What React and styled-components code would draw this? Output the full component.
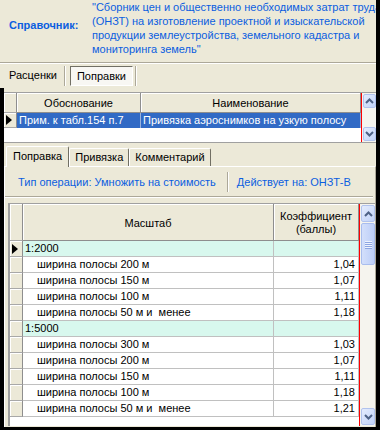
import React from "react";
import styled, { createGlobalStyle, css } from "styled-components";

const BEIGE = "#ECE9D8";
const BLUE = "#0B5EE0";

const GlobalStyle = createGlobalStyle`
  html, body { margin: 0; padding: 0; background: #000; }
  body { font-family: "Liberation Sans", Arial, sans-serif; font-size: 11px; color: #000; }
  * { box-sizing: border-box; }
`;

const rates = [
  { group: "1:2000" },
  { name: "ширина полосы 200 м", value: "1,04" },
  { name: "ширина полосы 150 м", value: "1,07" },
  { name: "ширина полосы 100 м", value: "1,11" },
  { name: "ширина полосы 50 м и  менее", value: "1,18" },
  { group: "1:5000" },
  { name: "ширина полосы 300 м", value: "1,03" },
  { name: "ширина полосы 200 м", value: "1,07" },
  { name: "ширина полосы 150 м", value: "1,11" },
  { name: "ширина полосы 100 м", value: "1,18" },
  { name: "ширина полосы 50 м и  менее", value: "1,21" },
];

const Chevron = ({ down }) => (
  <svg width="9" height="6" viewBox="0 0 9 6">
    <polyline
      points={down ? "1,1 4.5,4.5 8,1" : "1,5 4.5,1.5 8,5"}
      fill="none"
      stroke="#4D6185"
      strokeWidth="2"
    />
  </svg>
);

const ScrollBar = ({ width, thumb, upHeight }) => (
  <Track $width={width}>
    <ScrollBtn $height={upHeight}>
      <Chevron />
    </ScrollBtn>
    {thumb && (
      <Thumb>
        <Grip>
          <span />
          <span />
          <span />
          <span />
        </Grip>
      </Thumb>
    )}
    <Spacer />
    <ScrollBtn $height={upHeight}>
      <Chevron down />
    </ScrollBtn>
  </Track>
);

const App = () => {
  return (
    <>
      <GlobalStyle />
      <Window>
        <Header>
          <Label>Справочник:</Label>
          <Desc>
            <div>"Сборник цен и общественно необходимых затрат труда</div>
            <div>(ОНЗТ) на изготовление проектной и изыскательской</div>
            <div>продукции землеустройства, земельного кадастра и</div>
            <div>мониторинга земель"</div>
          </Desc>
        </Header>
        <Rule />
        <TopTabs>
          <FlatTab>Расценки</FlatTab>
          <VSep />
          <FlatTab $pressed>Поправки</FlatTab>
          <VSep />
        </TopTabs>
        <Lower>
          <TopGrid>
            <Table>
              <Row>
                <Indicator $head $height={20} />
                <HeadCell $width={124} $height={20}>Обоснование</HeadCell>
                <HeadCell $width={220} $height={20}>Наименование</HeadCell>
              </Row>
              <Row>
                <Indicator $height={15}>
                  <Arrow />
                </Indicator>
                <Cell $width={124} $height={15} $selected>
                  Прим. к табл.154 п.7
                </Cell>
                <Cell $width={220} $height={15} $selected>
                  Привязка аэроснимков на узкую полосу
                </Cell>
              </Row>
            </Table>
            <RedLine />
            <ScrollBar width={14} upHeight={14} />
          </TopGrid>

          <PageTabs>
            <PageTab $active>Поправка</PageTab>
            <PageTab>Привязка</PageTab>
            <PageTab>Комментарий</PageTab>
          </PageTabs>
          <PageBody>
            <InfoBar>
              <InfoText>Тип операции: Умножить на стоимость</InfoText>
              <InfoSep />
              <InfoText>Действует на: ОНЗТ-В</InfoText>
            </InfoBar>
            <PageRule />
            <RateGrid>
              <Table>
                <Row>
                  <Indicator $head $height={37} />
                  <HeadCell $width={251} $height={37}>Масштаб</HeadCell>
                  <HeadCell $width={85} $height={37}>
                    Коэффициент
                    <br />
                    (баллы)
                  </HeadCell>
                </Row>
                {rates.map((r, i) => (
                  <Row key={i}>
                    <Indicator $height={16}>{i === 0 && <Arrow />}</Indicator>
                    <Cell $width={251} $height={16} $group={!!r.group} $indent={!r.group}>
                      {r.group || r.name}
                    </Cell>
                    <Cell $width={85} $height={16} $group={!!r.group} $right>
                      {r.value}
                    </Cell>
                  </Row>
                ))}
              </Table>
              <RedLine />
              <ScrollBar width={15} upHeight={17} thumb />
            </RateGrid>
          </PageBody>
        </Lower>
      </Window>
    </>
  );
};

const Window = styled.div`
  width: 380px;
  height: 430px;
  display: flex;
  flex-direction: column;
  background: ${BEIGE};
  border-right: 4px solid #000;
  border-bottom: 3px solid #000;
  overflow: hidden;
`;

const Header = styled.div`
  display: flex;
  height: 62px;
  flex-shrink: 0;
`;

const Label = styled.div`
  width: 92px;
  padding: 18px 0 0 9px;
  line-height: 14px;
  font-weight: bold;
  color: ${BLUE};
`;

const Desc = styled.div`
  flex: 1;
  line-height: 14px;
  color: ${BLUE};
  white-space: nowrap;
  overflow: hidden;
`;

const Rule = styled.div`
  flex-shrink: 0;
  border-top: 1px solid #ACA899;
  border-bottom: 1px solid #fff;
`;

const TopTabs = styled.div`
  display: flex;
  align-items: center;
  height: 24px;
  flex-shrink: 0;
  padding-left: 9px;
`;

const FlatTab = styled.div`
  height: 20px;
  line-height: 18px;
  margin-right: 7px;
  ${({ $pressed }) =>
    $pressed &&
    css`
      margin: 0 2px 0 4px;
      padding: 0 6px;
      border: 1px solid;
      border-color: #716F64 #fff #fff #716F64;
      background: #F8F7F3;
    `}
`;

const VSep = styled.div`
  width: 2px;
  height: 20px;
  border-left: 1px solid #ACA899;
  border-right: 1px solid #fff;
`;

const Lower = styled.div`
  flex: 1;
  display: flex;
  flex-direction: column;
  border-left: 4px solid #000;
  padding-top: 4px;
  min-height: 0;
`;

const TopGrid = styled.div`
  display: flex;
  height: 51px;
  flex-shrink: 0;
  background: #fff;
  border-top: 1px solid #A0A0A0;
  border-bottom: 1px solid #A0A0A0;
`;

const Table = styled.div`
  flex: 1;
  display: flex;
  flex-direction: column;
  background: #fff;
`;

const Row = styled.div`
  display: flex;
`;

const Indicator = styled.div`
  width: ${({ $head }) => ($head ? 13 : 13)}px;
  height: ${({ $height }) => $height}px;
  flex-shrink: 0;
  display: flex;
  align-items: center;
  padding-left: 2px;
  background: ${BEIGE};
  border-right: 1px solid #8E8E8E;
  border-bottom: 1px solid #A8A8A8;
  box-shadow: inset 1px 1px 0 #fff;
`;

const Arrow = styled.div`
  width: 0;
  height: 0;
  border-top: 5px solid transparent;
  border-bottom: 5px solid transparent;
  border-left: 6px solid #000;
`;

const HeadCell = styled.div`
  width: ${({ $width }) => $width}px;
  height: ${({ $height }) => $height}px;
  flex-shrink: 0;
  display: flex;
  align-items: center;
  justify-content: center;
  text-align: center;
  line-height: 13px;
  padding-top: 2px;
  background: ${BEIGE};
  border-right: 1px solid #8E8E8E;
  border-bottom: 1px solid #8E8E8E;
  box-shadow: inset 1px 1px 0 #fff;
`;

const Cell = styled.div`
  width: ${({ $width }) => $width}px;
  height: ${({ $height }) => $height}px;
  flex-shrink: 0;
  line-height: 15px;
  white-space: pre;
  overflow: hidden;
  padding: 0 3px 0 ${({ $indent }) => ($indent ? 14 : 2)}px;
  text-align: ${({ $right }) => ($right ? "right" : "left")};
  background: ${({ $group }) => ($group ? "#D8F8EE" : "#fff")};
  border-right: 1px solid #C0C0C0;
  border-bottom: 1px solid #C0C0C0;
  ${({ $selected }) =>
    $selected &&
    css`
      background: #316AC5;
      color: #fff;
      border-color: #9AB2DC;
      border-bottom: none;
      line-height: 15px;
    `}
`;

const RedLine = styled.div`
  width: 1px;
  flex-shrink: 0;
  background: #FF0000;
`;

const Track = styled.div`
  width: ${({ $width }) => $width}px;
  flex-shrink: 0;
  display: flex;
  flex-direction: column;
  background: #F5F4EE;
  padding: 1px 0;
`;

const ScrollBtn = styled.div`
  height: ${({ $height }) => $height}px;
  margin: 0 0 0 1px;
  display: flex;
  align-items: center;
  justify-content: center;
  border: 1px solid #B1C3EE;
  border-radius: 2px;
  background: linear-gradient(135deg, #E4ECFD, #C1D2F8);
`;

const Thumb = styled.div`
  height: 42px;
  margin: 1px 0 0 1px;
  display: flex;
  align-items: center;
  justify-content: center;
  border: 1px solid #A8BDEE;
  border-radius: 2px;
  background: linear-gradient(90deg, #D3DFFB, #BCCEF8);
`;

const Grip = styled.div`
  display: flex;
  flex-direction: column;
  gap: 1px;
  span {
    display: block;
    width: 7px;
    height: 1px;
    background: #EEF3FE;
    box-shadow: 0 1px 0 #8CA5E2;
  }
`;

const Spacer = styled.div`
  flex: 1;
`;

const PageTabs = styled.div`
  display: flex;
  align-items: flex-end;
  height: 23px;
  flex-shrink: 0;
  padding-left: 2px;
`;

const PageTab = styled.div`
  height: ${({ $active }) => ($active ? 20 : 18)}px;
  padding: 0 ${({ $active }) => ($active ? 6 : 5)}px;
  line-height: ${({ $active }) => ($active ? 18 : 17)}px;
  border-top: 1px solid #fff;
  border-left: 1px solid #fff;
  border-right: 1px solid #716F64;
  border-radius: 2px 2px 0 0;
  background: ${BEIGE};
  ${({ $active }) =>
    $active &&
    css`
      margin-bottom: -1px;
      height: 21px;
      position: relative;
      z-index: 1;
    `}
`;

const PageBody = styled.div`
  flex: 1;
  display: flex;
  flex-direction: column;
  min-height: 0;
  border-top: 1px solid #fff;
  border-left: 1px solid #fff;
  border-right: 1px solid #ACA899;
`;

const InfoBar = styled.div`
  display: flex;
  align-items: center;
  height: 29px;
  flex-shrink: 0;
  padding-left: 13px;
`;

const InfoText = styled.div`
  color: ${BLUE};
`;

const InfoSep = styled.div`
  width: 2px;
  height: 20px;
  margin: 0 8px 0 11px;
  border-left: 1px solid #ACA899;
  border-right: 1px solid #fff;
`;

const PageRule = styled.div`
  flex-shrink: 0;
  margin-right: 2px;
  border-top: 1px solid #ACA899;
  border-bottom: 1px solid #fff;
`;

const RateGrid = styled.div`
  flex: 1;
  display: flex;
  margin: 5px 0 1px 3px;
  min-height: 0;
  background: #fff;
  border-top: 1px solid #A0A0A0;
  border-left: 2px solid #A0A0A0;
`;

export default App;
